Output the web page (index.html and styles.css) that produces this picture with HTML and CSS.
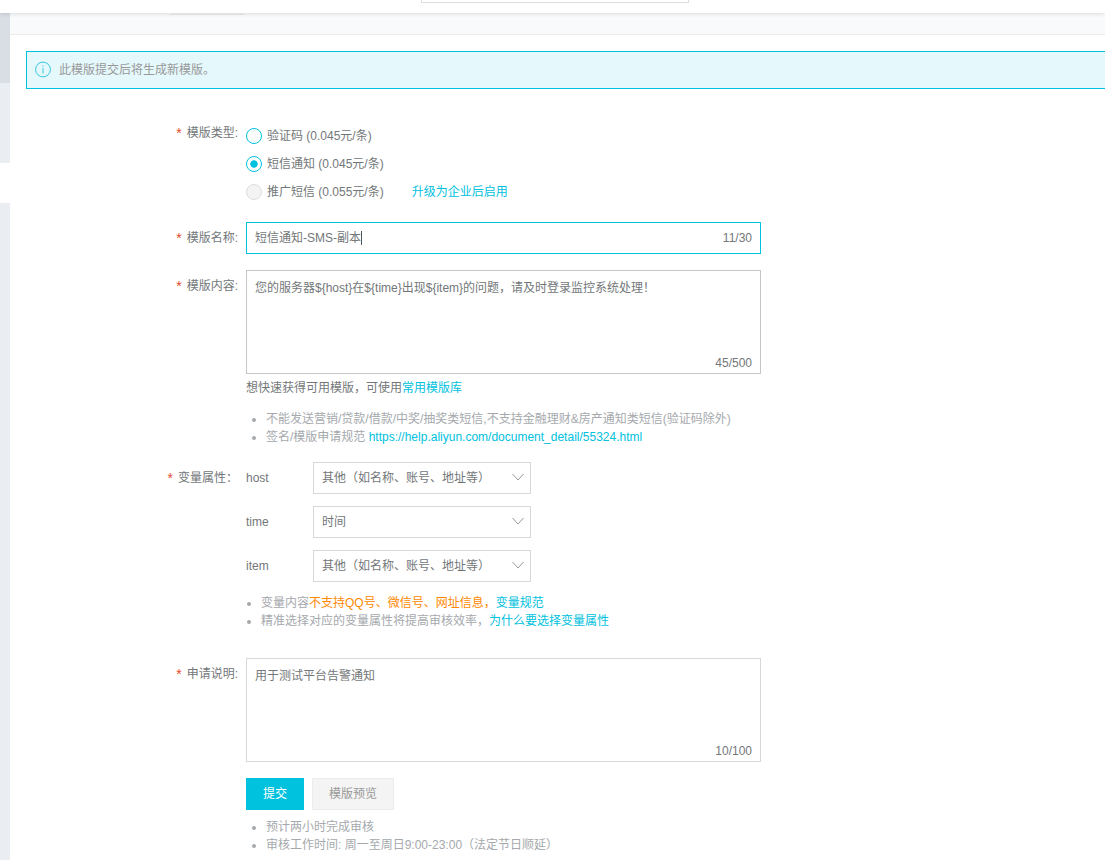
FILE: index.html
```html
<!DOCTYPE html>
<html lang="zh-CN">
<head>
<meta charset="utf-8">
<meta name="viewport" content="width=device-width, initial-scale=1">
<title>模版申请</title>
<link rel="stylesheet" href="styles.css">
</head>
<body>
<header class="topbar"><div class="topbar-search"></div></header>
<div class="shell">
  <aside class="sidebar">
    <div class="side-head"></div>
    <div class="side-block"></div>
    <div class="side-active"></div>
    <div class="side-rest"></div>
  </aside>
  <main class="main">
    <div class="page-head"><div class="page-tab"></div></div>
    <div class="alert" role="status">
      <svg class="alert-icon" viewBox="0 0 16 16" aria-hidden="true"><circle cx="8" cy="7.500" r="7.4"/><path d="M8 6v5.500M8 3.500v1.300"/></svg>
      <span>此模版提交后将生成新模版。</span>
    </div>
    <form class="form">
      <div class="row">
        <div class="label label-type" id="type-label"><span class="star">*</span>模版类型:</div>
        <div role="radiogroup" aria-labelledby="type-label">
          <label class="radio"><input type="radio" name="type"><span>验证码 (0.045元/条)</span></label>
          <label class="radio"><input type="radio" name="type" checked><span>短信通知 (0.045元/条)</span></label>
          <div class="radio-line">
            <label class="radio"><input type="radio" name="type" disabled><span>推广短信 (0.055元/条)</span></label>
            <a href="#">升级为企业后启用</a>
          </div>
        </div>
      </div>
      <div class="row">
        <label class="label" for="name"><span class="star">*</span>模版名称:</label>
        <div class="field">
          <input class="control text-input" id="name" type="text" value="短信通知-SMS-副本">
          <span class="caret"></span>
          <span class="count count-line">11/30</span>
        </div>
      </div>
      <div class="row">
        <label class="label" for="content"><span class="star">*</span>模版内容:</label>
        <div>
          <div class="field">
            <textarea class="control area area-dark" id="content">您的服务器${host}在${time}出现${item}的问题，请及时登录监控系统处理！</textarea>
            <span class="count">45/500</span>
          </div>
          <p class="hint">想快速获得可用模版，可使用<a href="#">常用模版库</a></p>
          <ul class="notes">
            <li>不能发送营销/贷款/借款/中奖/抽奖类短信,不支持金融理财&amp;房产通知类短信(验证码除外)</li>
            <li>签名/模版申请规范 <a href="#">https://help.aliyun.com/document_detail/55324.html</a></li>
          </ul>
        </div>
      </div>
      <div class="row">
        <div class="label"><span class="star">*</span>变量属性：</div>
        <div>
          <div class="vars">
            <label for="v-host">host</label>
            <div class="select"><select class="control" id="v-host"><option>其他（如名称、账号、地址等）</option></select><svg class="chevron" viewBox="0 0 12 8" aria-hidden="true"><path d="M.5 1L6 7l5.500-6"/></svg></div>
            <label for="v-time">time</label>
            <div class="select"><select class="control" id="v-time"><option>时间</option></select><svg class="chevron" viewBox="0 0 12 8" aria-hidden="true"><path d="M.5 1L6 7l5.500-6"/></svg></div>
            <label for="v-item">item</label>
            <div class="select"><select class="control" id="v-item"><option>其他（如名称、账号、地址等）</option></select><svg class="chevron" viewBox="0 0 12 8" aria-hidden="true"><path d="M.5 1L6 7l5.500-6"/></svg></div>
          </div>
          <ul class="notes notes-vars">
            <li>变量内容<span class="warn">不支持QQ号、微信号、网址信息，</span><a href="#">变量规范</a></li>
            <li>精准选择对应的变量属性将提高审核效率，<a href="#">为什么要选择变量属性</a></li>
          </ul>
        </div>
      </div>
      <div class="row">
        <label class="label" for="reason"><span class="star">*</span>申请说明:</label>
        <div>
          <div class="field">
            <textarea class="control area" id="reason">用于测试平台告警通知</textarea>
            <span class="count">10/100</span>
          </div>
          <div class="actions">
            <button class="btn btn-primary" type="submit">提交</button>
            <button class="btn" type="button">模版预览</button>
          </div>
          <ul class="notes">
            <li>预计两小时完成审核</li>
            <li>审核工作时间: 周一至周日9:00-23:00（法定节日顺延）</li>
          </ul>
        </div>
      </div>
    </form>
  </main>
</div>
</body>
</html>
```
FILE: styles.css
```css
* { box-sizing: border-box; }
body {
  margin: 0;
  min-height: 100vh;
  display: flex;
  flex-direction: column;
  background: #fff;
  color: #737779;
  font: 12px/18px "Liberation Sans", "Noto Sans CJK SC", sans-serif;
}
a { color: #00c1de; text-decoration: none; }
.topbar {
  position: relative;
  height: 13px;
  background: #fff;
  box-shadow: 0 1px 4px rgba(0, 0, 0, .12);
}
.topbar-search {
  width: 268px;
  height: 3px;
  margin-left: 421px;
  border: 1px solid #ddd;
  border-top: 0;
}
.shell { flex: 1; display: flex; }
.sidebar {
  width: 10px;
  flex: none;
  display: flex;
  flex-direction: column;
}
.side-head { height: 70px; background: #d9dde4; }
.side-block { height: 80px; background: #eaedf1; }
.side-active { height: 40px; background: #fff; }
.side-rest { flex: 1; background: #eaedf1; }
.main { flex: 1; min-width: 0; }
.page-head {
  height: 22px;
  background: #f9fafc;
  border-bottom: 1px solid #ebecec;
}
.page-tab {
  width: 74px;
  height: 2px;
  margin-left: 160px;
  background: #f4f5f6;
  border-bottom: 1px solid #ebecec;
}
.alert {
  display: flex;
  align-items: center;
  gap: 8px;
  height: 38px;
  margin: 16px 0 0 16px;
  padding-left: 8px;
  border: 1px solid #00c1de;
  border-right: 0;
  background: #e5f8fc;
  color: #999;
}
.alert-icon {
  width: 16px;
  height: 16px;
  overflow: visible;
  fill: none;
  stroke: #35c5e0;
}
.form {
  display: flex;
  flex-direction: column;
  gap: 16px;
  padding: 33px 16px 6px;
}
.row {
  display: grid;
  grid-template-columns: 212px minmax(0, 515px);
  column-gap: 8px;
}
.label { padding-top: 7px; text-align: right; }
.label-type { padding-top: 2px; }
.star {
  margin-right: 5px;
  color: #e6492d;
  font-size: 14px;
  line-height: 12px;
  vertical-align: -1px;
}
.radio {
  display: flex;
  align-items: center;
  gap: 5px;
  height: 28px;
}
.radio-line { display: flex; align-items: center; gap: 28px; }
.radio input {
  appearance: none;
  width: 16px;
  height: 16px;
  margin: 0;
  border: 1px solid #00c1de;
  border-radius: 50%;
  background: #fff;
}
.radio input:checked {
  background: radial-gradient(closest-side, #00c1de 85%, #fff 100%) center / 8px 8px no-repeat;
}
.radio input:disabled { border-color: #ddd; background: #f4f4f4; }
.field, .select { position: relative; }
.control {
  display: block;
  width: 100%;
  height: 32px;
  margin: 0;
  padding: 0 8px;
  border: 1px solid #d7d8d9;
  border-radius: 0;
  outline: 0;
  background: #fff;
  color: #737779;
  font: inherit;
  appearance: none;
}
.text-input { padding-bottom: 4px; border-color: #00c1de; }
.caret {
  position: absolute;
  left: 115px;
  top: 9px;
  width: 1px;
  height: 14px;
  background: #555;
}
.count { position: absolute; right: 9px; bottom: 2px; }
.count-line { bottom: 7px; }
.area { height: 104px; padding: 8px; resize: none; }
.area-dark { border-color: #c3c5c6; }
.hint { margin: 5px 0 13px; }
.notes {
  margin: 0;
  padding-left: 20px;
  color: #a5a9ad;
}
.vars {
  display: grid;
  grid-template-columns: 67px minmax(0, 218px);
  row-gap: 12px;
  align-items: center;
}
.notes-vars { margin: 12px 0; padding-left: 15px; }
.chevron {
  position: absolute;
  right: 7px;
  top: 11px;
  width: 12px;
  height: 8px;
  fill: none;
  stroke: #999;
  pointer-events: none;
}
.warn { color: #f80; }
.actions { display: flex; gap: 8px; margin: 16px 0 8px; }
.btn {
  height: 32px;
  padding: 0 16px;
  border: 1px solid #ebecec;
  background: #f4f4f4;
  color: #999;
  font: inherit;
}
.btn-primary { border-color: #00c1de; background: #00c1de; color: #fff; }
```
